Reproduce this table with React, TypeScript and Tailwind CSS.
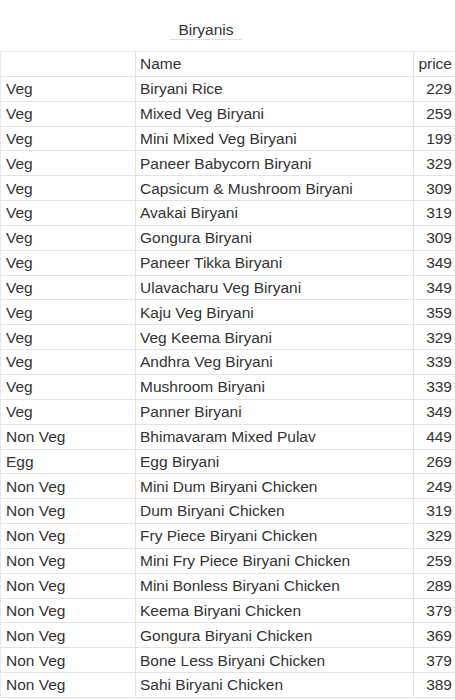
import React from 'react';

type Item = { kind: string; name: string; price: number };

const items: Item[] = [
  { kind: 'Veg', name: 'Biryani Rice', price: 229 },
  { kind: 'Veg', name: 'Mixed Veg Biryani', price: 259 },
  { kind: 'Veg', name: 'Mini Mixed Veg Biryani', price: 199 },
  { kind: 'Veg', name: 'Paneer Babycorn Biryani', price: 329 },
  { kind: 'Veg', name: 'Capsicum & Mushroom Biryani', price: 309 },
  { kind: 'Veg', name: 'Avakai Biryani', price: 319 },
  { kind: 'Veg', name: 'Gongura Biryani', price: 309 },
  { kind: 'Veg', name: 'Paneer Tikka Biryani', price: 349 },
  { kind: 'Veg', name: 'Ulavacharu Veg Biryani', price: 349 },
  { kind: 'Veg', name: 'Kaju Veg Biryani', price: 359 },
  { kind: 'Veg', name: 'Veg Keema Biryani', price: 329 },
  { kind: 'Veg', name: 'Andhra Veg Biryani', price: 339 },
  { kind: 'Veg', name: 'Mushroom Biryani', price: 339 },
  { kind: 'Veg', name: 'Panner Biryani', price: 349 },
  { kind: 'Non Veg', name: 'Bhimavaram Mixed Pulav', price: 449 },
  { kind: 'Egg', name: 'Egg Biryani', price: 269 },
  { kind: 'Non Veg', name: 'Mini Dum Biryani Chicken', price: 249 },
  { kind: 'Non Veg', name: 'Dum Biryani Chicken', price: 319 },
  { kind: 'Non Veg', name: 'Fry Piece Biryani Chicken', price: 329 },
  { kind: 'Non Veg', name: 'Mini Fry Piece Biryani Chicken', price: 259 },
  { kind: 'Non Veg', name: 'Mini Bonless Biryani Chicken', price: 289 },
  { kind: 'Non Veg', name: 'Keema Biryani Chicken', price: 379 },
  { kind: 'Non Veg', name: 'Gongura Biryani Chicken', price: 369 },
  { kind: 'Non Veg', name: 'Bone Less Biryani Chicken', price: 379 },
  { kind: 'Non Veg', name: 'Sahi Biryani Chicken', price: 389 },
];

const Row: React.FC<{ a: string; b: string; c: string | number }> = ({ a, b, c }) => (
  <div className="flex h-[24.85px] border-b border-[#e3e3e3] items-center">
    <div className="w-[135px] h-full flex items-center pl-[5px] border-r border-[#e3e3e3]">{a}</div>
    <div className="w-[278px] h-full flex items-center pl-[4px] border-r border-[#e3e3e3]">{b}</div>
    <div className="flex-1 h-full flex items-center justify-end pr-[3px]">{c}</div>
  </div>
);

export default function App() {
  return (
    <div
      className="w-[455px] h-[700px] overflow-hidden bg-white text-[#333333] text-[15.5px]"
      style={{ fontFamily: '"Liberation Sans", Arial, sans-serif' }}
    >
      <div className="flex pl-[170px] pt-[21px] h-[51px]">
        <div className="w-[72px] h-[19px] text-center border-b border-[#e0e0e0] leading-[18px]">Biryanis</div>
      </div>
      <div className="border-t border-l border-[#e8e8e8]">
        <Row a="" b="Name" c="price" />
        {items.map((it, i) => (
          <Row key={i} a={it.kind} b={it.name} c={it.price} />
        ))}
      </div>
    </div>
  );
}
